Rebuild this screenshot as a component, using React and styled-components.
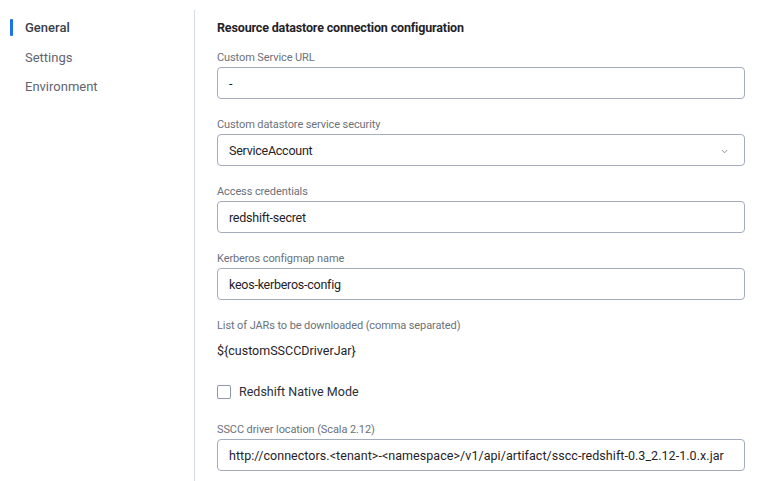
import React from "react";
import styled, { createGlobalStyle } from "styled-components";

const Global = createGlobalStyle`
  html, body { margin: 0; padding: 0; background: #ffffff; }
  body { font-family: Roboto, "Liberation Sans", sans-serif; color: #1f2329; }
  * { box-sizing: border-box; }
`;

const Page = styled.div`
  display: flex;
  width: 770px;
  height: 481px;
  padding-top: 10px;
  overflow: hidden;
`;

const Sidebar = styled.nav`
  width: 194px;
  flex-shrink: 0;
  display: flex;
  flex-direction: column;
  padding-top: 3px;
`;

const NavItem = styled.div`
  position: relative;
  height: 29.5px;
  display: flex;
  align-items: center;
  padding-left: 25px;
  font-size: 13px;
  color: ${(p) => (p.$active ? "#3a3f47" : "#5f6570")};
  font-weight: ${(p) => (p.$active ? 500 : 400)};
  &::before {
    content: "";
    display: ${(p) => (p.$active ? "block" : "none")};
    position: absolute;
    left: 10px;
    top: 6px;
    width: 3px;
    height: 17px;
    border-radius: 1px;
    background: #1a73e8;
  }
`;

const Content = styled.main`
  flex: 1;
  border-left: 1px solid #d6dde6;
  padding: 9px 25px 0 22px;
  display: flex;
  flex-direction: column;
`;

const Title = styled.h2`
  margin: 0 0 13px;
  font-size: 12.5px;
  letter-spacing: -0.15px;
  line-height: 18px;
  font-weight: 700;
  color: #1f2329;
`;

const Field = styled.div`
  display: flex;
  flex-direction: column;
  gap: 3px;
  margin-bottom: ${(p) => p.$mb ?? 18}px;
`;

const Label = styled.label`
  font-size: 11px;
  line-height: 14px;
  letter-spacing: -0.1px;
  color: #6b717b;
  padding-top: 1px;
  margin-bottom: -1px;
`;

const Box = styled.div`
  height: 32px;
  border: 1px solid #a2acba;
  border-radius: 4px;
  display: flex;
  align-items: center;
  justify-content: space-between;
  padding: 0 11px;
  font-size: 12.5px;
  letter-spacing: ${(p) => p.$spacing ?? -0.25}px;
  color: #1f2329;
  background: #fff;
  white-space: nowrap;
`;

const Chevron = styled.svg`
  width: 7px;
  height: 5px;
  margin-right: 5px;
  margin-top: 2px;
`;

const Plain = styled.div`
  font-size: 12.5px;
  line-height: 20px;
  margin-top: 6px;
  color: #1f2329;
`;

const CheckRow = styled.div`
  display: flex;
  align-items: center;
  gap: 8px;
  height: 20px;
  margin: 23px 0 23px;
  font-size: 12.5px;
  color: #2a2f36;
`;

const CheckBox = styled.span`
  width: 14px;
  height: 14px;
  border: 1px solid #8f98a6;
  border-radius: 2px;
  background: #fff;
`;

const fields = [
  { label: "Custom Service URL", value: "-" },
  { label: "Custom datastore service security", value: "ServiceAccount", select: true },
  { label: "Access credentials", value: "redshift-secret" },
  { label: "Kerberos configmap name", value: "keos-kerberos-config" },
];

export default function App() {
  return (
    <>
      <Global />
      <Page>
        <Sidebar>
          <NavItem $active>General</NavItem>
          <NavItem>Settings</NavItem>
          <NavItem>Environment</NavItem>
        </Sidebar>
        <Content>
          <Title>Resource datastore connection configuration</Title>
          {fields.map((f) => (
            <Field key={f.label}>
              <Label>{f.label}</Label>
              <Box>
                <span>{f.value}</span>
                {f.select && (
                  <Chevron viewBox="0 0 7 5">
                    <path d="M0.8 1 L3.5 3.8 L6.2 1" fill="none" stroke="#8b93a0" strokeWidth="1" />
                  </Chevron>
                )}
              </Box>
            </Field>
          ))}
          <Field $mb={0}>
            <Label>List of JARs to be downloaded (comma separated)</Label>
            <Plain>{"${customSSCCDriverJar}"}</Plain>
          </Field>
          <CheckRow>
            <CheckBox />
            Redshift Native Mode
          </CheckRow>
          <Field>
            <Label>SSCC driver location (Scala 2.12)</Label>
            <Box $spacing={0.05}>
              <span>http://connectors.&lt;tenant&gt;-&lt;namespace&gt;/v1/api/artifact/sscc-redshift-0.3_2.12-1.0.x.jar</span>
            </Box>
          </Field>
        </Content>
      </Page>
    </>
  );
}
